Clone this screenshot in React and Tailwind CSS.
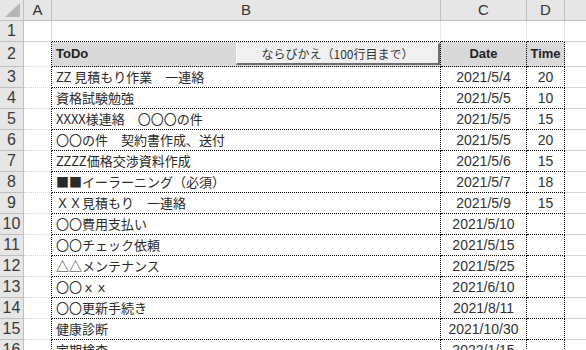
import React from 'react';

const rows = [
  { todo: 'ZZ 見積もり作業　一連絡', date: '2021/5/4', time: '20' },
  { todo: '資格試験勉強', date: '2021/5/5', time: '10' },
  { todo: 'XXXX様連絡　〇〇〇の件', date: '2021/5/5', time: '15' },
  { todo: '〇〇の件　契約書作成、送付', date: '2021/5/5', time: '20' },
  { todo: 'ZZZZ価格交渉資料作成', date: '2021/5/6', time: '15' },
  { todo: '■■イーラーニング（必須）', date: '2021/5/7', time: '18' },
  { todo: 'ＸＸ見積もり　一連絡', date: '2021/5/9', time: '15' },
  { todo: '〇〇費用支払い', date: '2021/5/10', time: '' },
  { todo: '〇〇チェック依頼', date: '2021/5/15', time: '' },
  { todo: '△△メンテナンス', date: '2021/5/25', time: '' },
  { todo: '〇〇ｘｘ', date: '2021/6/10', time: '' },
  { todo: '〇〇更新手続き', date: '2021/8/11', time: '' },
  { todo: '健康診断', date: '2021/10/30', time: '' },
  { todo: '定期検査', date: '2022/1/15', time: '' },
];

const font = { fontFamily: '"Liberation Sans", "Noto Sans CJK JP", sans-serif' };
const jpFont = { fontFamily: '"Noto Sans CJK JP", "Liberation Sans", sans-serif' };

function RowHead({ n }) {
  return (
    <div className="w-[24px] shrink-0 h-full flex items-center justify-center bg-[#e6e6e6] border-r border-b border-[#bfbfbf] text-[16px] text-[#3a3a3a]">
      {n}
    </div>
  );
}

export default function App() {
  return (
    <div className="w-[586px] h-[350px] overflow-hidden bg-white text-[#222]" style={font}>
      {/* column headers */}
      <div className="flex h-[21px] bg-[#e6e6e6] text-[15px] text-[#333]">
        <div className="w-[24px] shrink-0 h-full border-r border-b border-[#bfbfbf] relative">
          <svg className="absolute right-[3px] bottom-[3px]" width="15" height="14" viewBox="0 0 15 14">
            <polygon points="15,0 15,14 0,14" fill="#b5b5b5" />
          </svg>
        </div>
        <div className="w-[28px] shrink-0 h-full border-r border-b border-[#bfbfbf] flex items-center justify-center">A</div>
        <div className="w-[389px] shrink-0 h-full border-r border-b border-[#bfbfbf] flex items-center justify-center">B</div>
        <div className="w-[86px] shrink-0 h-full border-r border-b border-[#bfbfbf] flex items-center justify-center">C</div>
        <div className="w-[38px] shrink-0 h-full border-r border-b border-[#bfbfbf] flex items-center justify-center">D</div>
        <div className="flex-1 h-full border-b border-[#bfbfbf]"></div>
      </div>

      {/* row 1 */}
      <div className="flex h-[21px]">
        <RowHead n={1} />
        <div className="w-[28px] shrink-0 border-r border-b border-[#d4d4d4]"></div>
        <div className="w-[389px] shrink-0 border-r border-b border-[#d4d4d4] border-b-black border-dotted"></div>
        <div className="w-[86px] shrink-0 border-r border-b border-[#d4d4d4] border-b-black border-dotted"></div>
        <div className="w-[38px] shrink-0 border-r border-b border-[#d4d4d4] border-b-black border-dotted"></div>
        <div className="flex-1 border-b border-[#d4d4d4]"></div>
      </div>

      {/* row 2: header */}
      <div className="flex h-[25px]">
        <RowHead n={2} />
        <div className="w-[28px] shrink-0 border-r border-b border-dotted border-r-black border-b-[#d4d4d4]"></div>
        <div className="w-[389px] shrink-0 relative bg-[#d9d9d9] border-r border-b border-dotted border-black flex items-center pl-[4px] text-[13px] font-bold">
          ToDo
          <button
            className="absolute left-[184px] top-[1px] w-[204px] h-[22px] bg-[#f0f0f0] border border-t-[#fafafa] border-l-[#fafafa] border-r-2 border-b-2 border-r-[#6e6e6e] border-b-[#6e6e6e] text-[12px] font-normal text-[#333] flex items-center justify-center"
            style={jpFont}
          >
            ならびかえ（100行目まで）
          </button>
        </div>
        <div className="w-[86px] shrink-0 bg-[#d9d9d9] border-r border-b border-dotted border-black flex items-center justify-center text-[13px] font-bold">Date</div>
        <div className="w-[38px] shrink-0 bg-[#d9d9d9] border-r border-b border-dotted border-black flex items-center justify-center text-[13px] font-bold">Time</div>
        <div className="flex-1 border-b border-[#d4d4d4]"></div>
      </div>

      {rows.map((r, i) => (
        <div key={i} className="flex h-[21px]">
          <RowHead n={i + 3} />
          <div className="w-[28px] shrink-0 border-r border-b border-dotted border-r-black border-b-[#d4d4d4]"></div>
          <div
            className="w-[389px] shrink-0 border-r border-b border-dotted border-black flex items-center pl-[4px] text-[13px] text-[#2a2a2a] whitespace-nowrap overflow-hidden"
            style={jpFont}
          >
            {r.todo}
          </div>
          <div className="w-[86px] shrink-0 border-r border-b border-dotted border-black flex items-center justify-center text-[14px] text-[#333]">
            {r.date}
          </div>
          <div className="w-[38px] shrink-0 border-r border-b border-dotted border-black flex items-center justify-center text-[14px] text-[#333]">
            {r.time}
          </div>
          <div className="flex-1 border-b border-[#d4d4d4]"></div>
        </div>
      ))}
    </div>
  );
}
